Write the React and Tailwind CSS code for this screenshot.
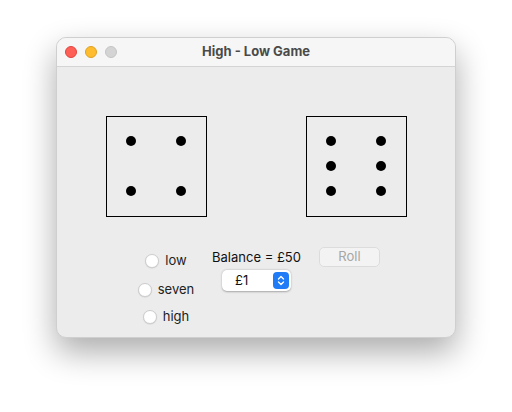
import React from 'react';

const Die = ({ dots }) => {
    // dots: list of [x, y] centres inside the face
    return (
        <div className="relative w-[101px] h-[101px] border border-black">
            {dots.map(([x, y], i) => (
                <span
                    key={i}
                    className="absolute w-[10px] h-[10px] rounded-full bg-black"
                    style={{ left: x - 5, top: y - 5 }}
                />
            ))}
        </div>
    );
};

const Radio = ({ label, className }) => (
    <label className={`flex items-center gap-[6px] h-[20px] ${className}`}>
        <span className="w-[14px] h-[14px] rounded-full bg-white border border-[#cdcdcd] shadow-[0_0.5px_1px_rgba(0,0,0,0.12)]" />
        <span className="text-[13px] text-[#222]">{label}</span>
    </label>
);

const App = () => {
    const four = [[24, 24], [74, 24], [24, 74], [74, 74]];
    const six = [[24, 24], [74, 24], [24, 49], [74, 49], [24, 74], [74, 74]];

    return (
        <div className="w-[512px] h-[412px] bg-white pt-[37px] pl-[56px]" style={{ fontFamily: 'Inter, "Liberation Sans", Arial, sans-serif' }}>
            <div className="w-[400px] h-[301px] rounded-[10px] bg-[#ececec] border border-[#cfcfcf] shadow-[0_14px_32px_rgba(0,0,0,0.33)] overflow-hidden flex flex-col">
                <div className="relative h-[29px] bg-[#f6f6f6] border-b border-[#d4d4d4] flex items-center justify-center shrink-0">
                    <div className="absolute left-[8px] top-[8px] flex gap-[8px]">
                        <span className="w-[12px] h-[12px] rounded-full bg-[#fe5f57] border border-[#e0443e]" />
                        <span className="w-[12px] h-[12px] rounded-full bg-[#febc2e] border border-[#dea123]" />
                        <span className="w-[12px] h-[12px] rounded-full bg-[#d4d4d4] border border-[#c4c4c4]" />
                    </div>
                    <span className="text-[13px] font-bold text-[#4a4a4a]">High - Low Game</span>
                </div>

                <div className="flex pl-[49px] pt-[49px] gap-[99px]">
                    <Die dots={four} />
                    <Die dots={six} />
                </div>

                <div className="flex items-start pl-[74px] mt-[34px]">
                    <div className="w-[70px] flex flex-col items-center">
                        <Radio label="low" className="" />
                        <Radio label="seven" className="mt-[9px]" />
                        <Radio label="high" className="mt-[7px]" />
                    </div>
                    <div className="w-[111px] flex flex-col items-center">
                        <span className="text-[13px] text-[#111] leading-[16px] mt-[-2px]">Balance = £50</span>
                        <div className="mt-[5px] w-[69px] h-[21px] bg-white rounded-[5px] shadow-[0_0.5px_2px_rgba(0,0,0,0.3)] flex items-center justify-between pl-[13px] pr-[2px]">
                            <span className="text-[13px] text-[#111]">£1</span>
                            <span className="w-[16px] h-[17px] rounded-[4px] bg-[#1f7cf6] flex items-center justify-center">
                                <svg width="8" height="11" viewBox="0 0 8 11" fill="none" stroke="white" strokeWidth="1.4" strokeLinecap="round" strokeLinejoin="round">
                                    <path d="M1.5 4 L4 1.5 L6.5 4" />
                                    <path d="M1.5 7 L4 9.5 L6.5 7" />
                                </svg>
                            </span>
                        </div>
                    </div>
                    <button className="ml-[7px] mt-[-4px] w-[61px] h-[20px] rounded-[5px] bg-[#f3f3f3] border border-[#dcdcdc] text-[13px] text-[#a6a6a6] flex items-center justify-center">
                        Roll
                    </button>
                </div>
            </div>
        </div>
    );
};

export default App;
